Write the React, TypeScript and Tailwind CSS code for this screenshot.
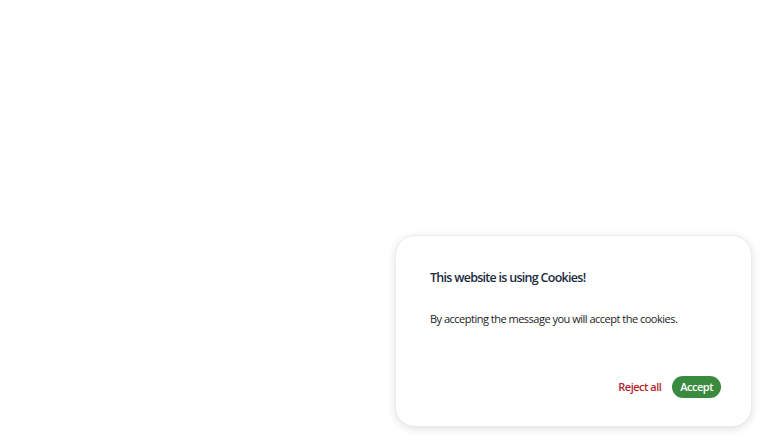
import React from "react";

export default function App() {
  return (
    <div className="relative w-[768px] h-[443px] bg-white" style={{ fontFamily: '"Open Sans", sans-serif' }}>
      <div className="absolute right-[16px] bottom-[16px] w-[357px] h-[192px] rounded-[20px] bg-white border border-[#ececec] shadow-[0_2px_8px_rgba(0,0,0,0.12)] pl-[34px] pr-[30px] pt-[33px] flex flex-col tracking-[-0.5px]">
        <h2 className="text-[12.5px] font-semibold text-[#1b2a3c] leading-[18px] tracking-[-0.72px]">This website is using Cookies!</h2>
        <p className="mt-[24px] text-[11px] text-[#222] leading-[16px]">By accepting the message you will accept the cookies.</p>
        <div className="mt-auto mb-[28px] flex justify-end items-center gap-[11px]">
          <button className="text-[11px] font-semibold text-[#b3262d]">Reject all</button>
          <button className="h-[22px] px-[8px] rounded-full bg-[#3a8a3f] text-white text-[11px] font-semibold">Accept</button>
        </div>
      </div>
    </div>
  );
}
